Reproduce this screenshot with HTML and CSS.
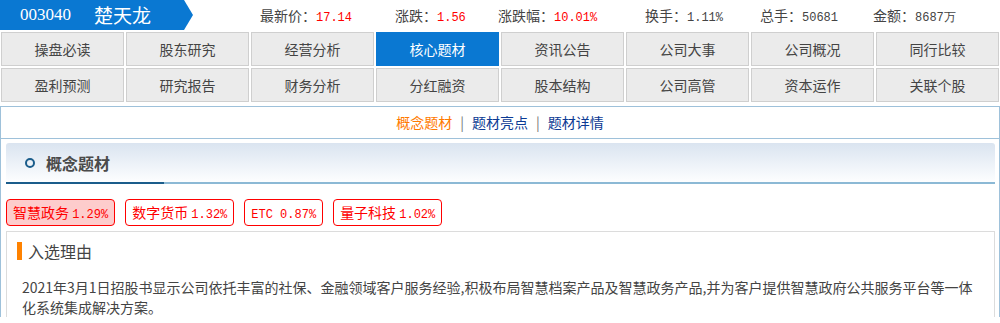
FILE: index.html
```html
<!DOCTYPE html>
<html>

<head>
	<meta http-equiv="Content-Type" content="text/html; charset=utf-8" />
	<title>楚天龙 003040 核心题材</title>
	<link rel="stylesheet" href="styles.css">
</head>

<body>
	<div class="top">
		<div class="stock">
			<span class="code">003040</span>
			<span class="name">楚天龙</span>
		</div>
		<ul class="quote">
			<li>最新价：<em>17.14</em></li>
			<li>涨跌：<em>1.56</em></li>
			<li>涨跌幅：<em>10.01%</em></li>
			<li>换手：<span>1.11%</span></li>
			<li>总手：<span>50681</span></li>
			<li>金额：<span>8687万</span></li>
		</ul>
	</div>

	<ul class="menu">
		<li><a href="#">操盘必读</a></li>
		<li><a href="#">股东研究</a></li>
		<li><a href="#">经营分析</a></li>
		<li><a href="#" class="on">核心题材</a></li>
		<li><a href="#">资讯公告</a></li>
		<li><a href="#">公司大事</a></li>
		<li><a href="#">公司概况</a></li>
		<li><a href="#">同行比较</a></li>
		<li><a href="#">盈利预测</a></li>
		<li><a href="#">研究报告</a></li>
		<li><a href="#">财务分析</a></li>
		<li><a href="#">分红融资</a></li>
		<li><a href="#">股本结构</a></li>
		<li><a href="#">公司高管</a></li>
		<li><a href="#">资本运作</a></li>
		<li><a href="#">关联个股</a></li>
	</ul>

	<div class="panel">
		<div class="subnav">
			<a href="#" class="cur">概念题材</a><i>|</i><a href="#">题材亮点</a><i>|</i><a href="#">题材详情</a>
		</div>
		<div class="section">
			<div class="sec-hd">
				<h3>概念题材</h3>
			</div>
			<div class="tags">
				<a href="#" class="hot">智慧政务 <span>1.29%</span></a>
				<a href="#">数字货币 <span>1.32%</span></a>
				<a href="#"><span>ETC 0.87%</span></a>
				<a href="#">量子科技 <span>1.02%</span></a>
			</div>
			<div class="reason">
				<h4>入选理由</h4>
				<p>2021年3月1日招股书显示公司依托丰富的社保、金融领域客户服务经验,积极布局智慧档案产品及智慧政务产品,并为客户提供智慧政府公共服务平台等一体化系统集成解决方案。</p>
			</div>
		</div>
	</div>
</body>

</html>
```

FILE: styles.css
```css
body {
	margin: 0;
	font-family: "Noto Sans CJK SC", "Liberation Sans", sans-serif;
	font-size: 14px;
	color: #333;
	background-color: #fff;
}

a {
	text-decoration: none;
	color: inherit;
}

ul {
	list-style: none;
	margin: 0;
	padding: 0;
}

/* stock bar */
.top {
	display: flex;
	height: 30px;
	line-height: 30px;
}

.stock {
	display: flex;
	width: 193px;
	height: 30px;
	padding-left: 20px;
	box-sizing: border-box;
	background-color: #0a78d2;
	color: #fff;
	clip-path: polygon(0 0, 184px 0, 193px 15px, 184px 30px, 0 30px);
}

.stock .code {
	font-family: "Liberation Serif", serif;
	font-size: 17px;
}

.stock .name {
	margin-left: 23px;
	font-size: 19px;
}

.quote {
	display: grid;
	grid-template-columns: 135px 103px 147px 115px 113px auto;
	margin-left: 67px;
	color: #444;
}

.quote em,
.quote span {
	font-style: normal;
	font-family: "Liberation Mono", monospace;
	font-size: 12px;
}

.quote em {
	color: #f00;
}

/* menu */
.menu {
	display: grid;
	grid-template-columns: repeat(8, 123px);
	gap: 2px;
	margin-top: 2px;
	padding-left: 1px;
}

.menu a {
	display: block;
	height: 32px;
	line-height: 32px;
	border: 1px solid #cfcfcf;
	background-color: #ebebeb;
	text-align: center;
	color: #444;
}

.menu a.on {
	border-color: #0a78d2;
	background-color: #0a78d2;
	color: #fff;
}

/* panel */
.panel {
	margin-top: 4px;
	border: 1px solid #9ec1da;
	border-bottom: none;
}

.subnav {
	height: 31px;
	line-height: 31px;
	border-bottom: 1px solid #9ec1da;
	text-align: center;
}

.subnav a {
	color: #0b3a94;
}

.subnav a.cur {
	color: #ff7a00;
}

.subnav i {
	font-style: normal;
	color: #777;
	margin: 0 8px;
}

.section {
	padding: 4px 4px 0 5px;
}

.sec-hd {
	height: 39px;
	border-radius: 3px 3px 0 0;
	border-bottom: 2px solid #8cb9d5;
	background: linear-gradient(#dae4f0, #fdfeff);
}

.sec-hd h3 {
	display: flex;
	align-items: center;
	width: 158px;
	height: 41px;
	margin: 0;
	padding: 1px 0 0 19px;
	box-sizing: border-box;
	border-bottom: 2px solid #1b5d8b;
	font-size: 16px;
	color: #4a4a4a;
}

.sec-hd h3:before {
	content: "";
	width: 6px;
	height: 6px;
	margin-right: 11px;
	border: 2px solid #1b5d8b;
	border-radius: 50%;
}

/* tags */
.tags {
	display: flex;
	gap: 10px;
	margin: 15px 0 5px;
}

.tags a {
	height: 25px;
	line-height: 25px;
	padding: 0 6px;
	border: 1px solid #f00;
	border-radius: 4px;
	color: #f00;
}

.tags a.hot {
	background-color: #fdcccc;
}

.tags span {
	font-family: "Liberation Mono", monospace;
	font-size: 12px;
}

/* reason */
.reason {
	padding: 10px 10px 0;
	border: 1px solid #dcdcdc;
	border-bottom: none;
}

.reason h4 {
	margin: 0;
	padding-left: 6px;
	border-left: 5px solid #ff8200;
	font-size: 16px;
	font-weight: normal;
	line-height: 18px;
	color: #444;
}

.reason p {
	margin: 17px 5px 0;
	line-height: 20px;
	color: #444;
}
```
